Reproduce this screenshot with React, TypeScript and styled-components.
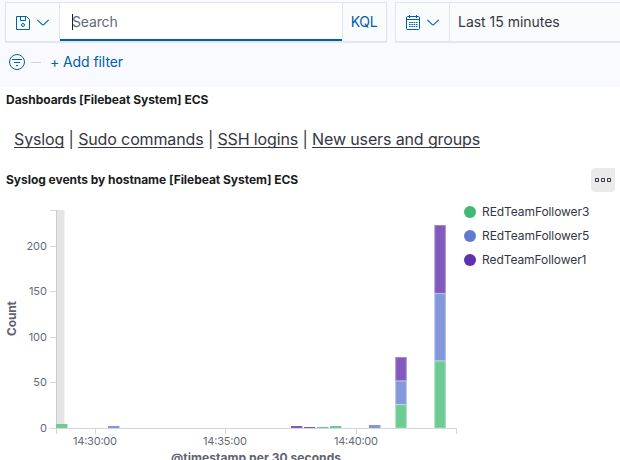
import React from "react";
import styled, { createGlobalStyle } from "styled-components";

const Global = createGlobalStyle`
  * { box-sizing: border-box; }
  body { margin: 0; background: #fff; overflow: hidden; font-family: Inter, sans-serif; color: #343741; }
`;

const Page = styled.main`
  width: 620px;
  height: 460px;
  overflow: hidden;
  display: flex;
  flex-direction: column;
`;

const QueryHeader = styled.header`
  height: 87px;
  flex: none;
  background: #f9faff;
  padding: 2px 0 0 5px;
`;

const QueryRow = styled.div`
  display: flex;
  gap: 8px;
`;

const ControlGroup = styled.div<{ $width: number }>`
  display: flex;
  flex: none;
  width: ${(p) => p.$width}px;
  height: 40px;
  border: 1px solid #e0e4ee;
  background: #fafbfd;
  box-shadow: 0 1px 1px #e6e9f1;
`;

const IconButton = styled.button`
  display: flex;
  align-items: center;
  gap: 5px;
  width: 54px;
  padding: 0 0 0 9px;
  border: 0;
  border-right: 1px solid #e0e4ee;
  background: transparent;
  color: #0061a6;
`;

const SearchField = styled.div`
  display: flex;
  align-items: center;
  width: 282px;
  padding: 0 0 0 12px;
  background: linear-gradient(#0061a6, #0061a6) bottom / 100% 2px no-repeat #fff;
  font-size: 14px;
  line-height: 20px;
  letter-spacing: -0.16px;
  color: #646a77;
`;

const Caret = styled.span`
  width: 1px;
  height: 16px;
  margin-right: -1px;
  background: #1a1c21;
`;

const Language = styled.button`
  flex: 1;
  padding: 0 1px 0 0;
  border: 0;
  border-left: 1px solid #e0e4ee;
  background: transparent;
  font: 14px/20px Inter, sans-serif;
  letter-spacing: -0.4px;
  color: #0061a6;
`;

const DateRange = styled.div`
  padding: 9px 0 0 8px;
  font-size: 14px;
  line-height: 20px;
  letter-spacing: -0.02px;
`;

const FilterRow = styled.div`
  display: flex;
  align-items: center;
  height: 40px;
  padding-left: 4px;
  color: #0061a6;
`;

const FilterRule = styled.span`
  width: 10px;
  height: 1px;
  margin: 0 9px 0 6px;
  background: #ccd3df;
`;

const AddFilter = styled.span`
  font-size: 14px;
  line-height: 20px;
  letter-spacing: -0.08px;
`;

const PanelTitle = styled.h2`
  margin: 0;
  padding-left: 6px;
  font-size: 12px;
  line-height: 18px;
  font-weight: 700;
  letter-spacing: -0.04px;
  color: #1a1c21;
`;

const LinksPanel = styled.section`
  height: 81px;
  flex: none;
  padding-top: 4px;
`;

const Links = styled.nav`
  padding: 18px 0 0 14px;
  font-size: 16px;
  line-height: 24px;
  letter-spacing: -0.13px;
  white-space: pre;
`;

const Link = styled.a`
  text-decoration: underline;
  text-decoration-skip-ink: none;
  text-decoration-thickness: 1px;
  text-underline-offset: 2px;
`;

const ChartHeader = styled.div`
  display: flex;
  justify-content: space-between;
  align-items: center;
  height: 24px;
  padding-right: 5px;
`;

const MenuButton = styled.button`
  display: grid;
  place-items: center;
  width: 24px;
  height: 24px;
  padding: 0;
  border: 0;
  border-radius: 4px 0 4px 4px;
  background: #eaeaea;
`;

const ChartBody = styled.div`
  display: flex;
`;

const Legend = styled.ul`
  margin: 0;
  padding: 8px 0 0 4px;
  list-style: none;
`;

const LegendItem = styled.li`
  display: flex;
  align-items: center;
  gap: 6px;
  height: 24px;
  font-size: 12px;
  line-height: 14px;
  letter-spacing: -0.08px;
`;

const LegendLabel = styled.span`
  padding-bottom: 1px;
`;

const Dot = styled.span<{ $color: string }>`
  width: 12px;
  height: 12px;
  border-radius: 50%;
  background: ${(p) => p.$color};
`;

const TickText = styled.text`
  font: 11px Inter, sans-serif;
  fill: #646a77;
`;

const AxisTitle = styled.text`
  font: 700 12px Inter, sans-serif;
  fill: #5d6370;
  text-anchor: middle;
`;

const GREEN = "#6dcb93";
const BLUE = "#8397db";
const PURPLE = "#8259bd";

const bars: [number, number, number, string][] = [
  [56, 424, 428, GREEN],
  [108, 426, 428, BLUE],
  [291, 426, 428, PURPLE],
  [304, 427, 428, PURPLE],
  [317, 427, 428, GREEN],
  [330, 426, 428, GREEN],
  [369, 425, 428, BLUE],
  [395.3, 404.3, 428, GREEN],
  [395.3, 380.7, 404.3, BLUE],
  [395.3, 357, 380.7, PURPLE],
  [434.4, 360.7, 428, GREEN],
  [434.4, 293.3, 360.7, BLUE],
  [434.4, 225, 293.3, PURPLE],
];

const yTicks: [number, string][] = [
  [210, ""],
  [246, "200"],
  [291, "150"],
  [337, "100"],
  [382, "50"],
  [428, "0"],
];

const xTicks: [number, string][] = [
  [56, ""],
  [95, "14:30:00"],
  [225, "14:35:00"],
  [356, "14:40:00"],
  [456, ""],
];

const Histogram = () => (
  <svg width="460" height="268" viewBox="0 192 460 268">
    <rect x="57" y="210" width="7" height="218" fill="#e5e5e5" />
    <rect x="64" y="210" width="1" height="218" fill="#f3f3f3" />
    <path d="M56.5 210V433" stroke="#ccc" />
    <path d="M56 428.5H457" stroke="#d6d6d6" />
    {yTicks.map(([y, label]) => (
      <g key={y}>
        <path d={`M50 ${y + 0.5}H56`} stroke="#d6d6d6" />
        <TickText x="47" y={y + 4} textAnchor="end">{label}</TickText>
      </g>
    ))}
    {xTicks.map(([x, label]) => (
      <g key={x}>
        <path d={`M${x + 0.5} 429V434`} stroke="#d6d6d6" />
        {label && (
          <TickText x={x} y="445" textAnchor="middle" textLength="44">{label}</TickText>
        )}
      </g>
    ))}
    {bars.map(([x, top, bottom, color]) => (
      <g key={`${x}-${top}`}>
        <rect x={x} y={top} width="11.4" height={bottom - top} fill={color} />
        {bottom - top > 5 && (
          <rect x={x + 0.5} y={top + 0.5} width="10.4" height={bottom - top - 0.5} fill="none" stroke="#fff" strokeOpacity=".28" />
        )}
      </g>
    ))}
    <AxisTitle transform="translate(16 318.5) rotate(-90)" textLength="35">Count</AxisTitle>
    <AxisTitle x="256" y="462" textLength="170">@timestamp per 30 seconds</AxisTitle>
  </svg>
);

const Chevron = () => (
  <svg width="14" height="16" viewBox="0 0 14 16" fill="none" stroke="currentColor" strokeWidth="1.1">
    <path d="M1.3 5.8 6.3 10.6Q7 11.2 7.7 10.6L12.7 5.8" />
  </svg>
);

const SaveIcon = () => (
  <svg width="16" height="16" viewBox="0 0 16 16" fill="none" stroke="currentColor">
    <path d="M1.5 2.5h10l3 3v10h-13zM5.5 2.5v4h5v-4" />
    <circle cx="8" cy="11" r="1.5" />
  </svg>
);

const CalendarIcon = () => (
  <svg width="16" height="16" viewBox="0 0 16 16" fill="none" stroke="currentColor">
    <rect x="1.5" y="2.5" width="13" height="13" rx="1.2" />
    <path d="M1.5 5.5h13M4.5 1v3M11.5 1v3" />
    <path d="M4 8.5h8.5M4 10.5h8.5M4 12.5h8.5" strokeDasharray="1.6 .7" />
  </svg>
);

const FilterIcon = () => (
  <svg width="16" height="16" viewBox="0 0 16 16" fill="none" stroke="currentColor">
    <circle cx="8" cy="8" r="7.5" />
    <path d="M3 5.5h10M5 8.5h6M7 11.5h2" />
  </svg>
);

const BoxesIcon = () => (
  <svg width="16" height="16" viewBox="0 0 16 16" fill="none" stroke="#343741">
    <path d="M.5 6.5h3v3h-3zM6.5 6.5h3v3h-3zM12.5 6.5h3v3h-3z" />
  </svg>
);

export default function App() {
  return (
    <Page>
      <Global />
      <QueryHeader>
        <QueryRow>
          <ControlGroup $width={382}>
            <IconButton aria-label="Saved queries"><SaveIcon /><Chevron /></IconButton>
            <SearchField><Caret />Search</SearchField>
            <Language>KQL</Language>
          </ControlGroup>
          <ControlGroup $width={240}>
            <IconButton aria-label="Quick dates"><CalendarIcon /><Chevron /></IconButton>
            <DateRange>Last 15 minutes</DateRange>
          </ControlGroup>
        </QueryRow>
        <FilterRow>
          <FilterIcon />
          <FilterRule />
          <AddFilter>+ Add filter</AddFilter>
        </FilterRow>
      </QueryHeader>
      <LinksPanel>
        <PanelTitle>Dashboards [Filebeat System] ECS</PanelTitle>
        <Links>
          <Link>Syslog</Link> | <Link>Sudo commands</Link> | <Link>SSH logins</Link> | <Link>New users and groups</Link>
        </Links>
      </LinksPanel>
      <section>
        <ChartHeader>
          <PanelTitle>Syslog events by hostname [Filebeat System] ECS</PanelTitle>
          <MenuButton aria-label="Panel options"><BoxesIcon /></MenuButton>
        </ChartHeader>
        <ChartBody>
          <Histogram />
          <Legend>
            <LegendItem><Dot $color="#41b873" /><LegendLabel>REdTeamFollower3</LegendLabel></LegendItem>
            <LegendItem><Dot $color="#6079d2" /><LegendLabel>REdTeamFollower5</LegendLabel></LegendItem>
            <LegendItem><Dot $color="#5e31ad" /><LegendLabel>RedTeamFollower1</LegendLabel></LegendItem>
          </Legend>
        </ChartBody>
      </section>
    </Page>
  );
}
